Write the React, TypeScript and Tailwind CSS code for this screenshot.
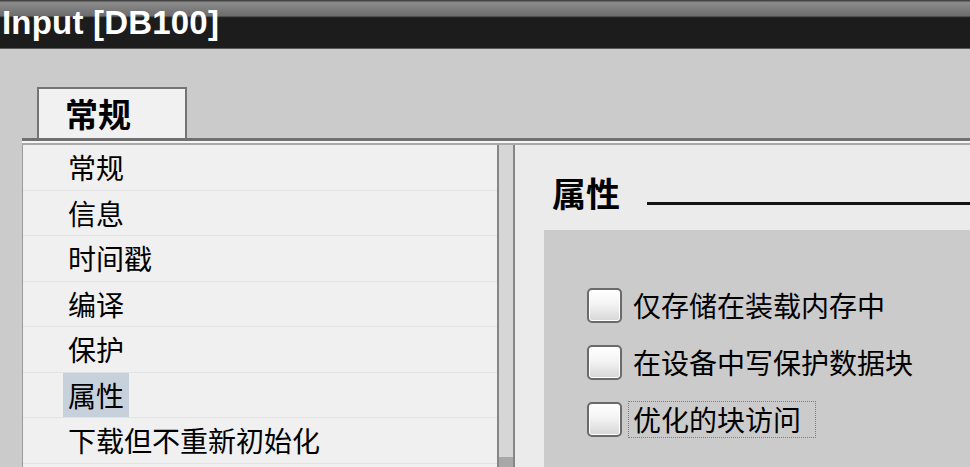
const cjk = '"Noto Sans CJK SC", sans-serif';

const navItems = ['常规', '信息', '时间戳', '编译', '保护', '属性', '下载但不重新初始化'];
const options = ['仅存储在装载内存中', '在设备中写保护数据块', '优化的块访问'];

function Checkbox() {
  return (
    <span className="box-border h-[35px] w-[35px] shrink-0 rounded-[5px] border-2 border-[#6a6a6a] bg-[linear-gradient(to_bottom,#ffffff_0%,#f4f4f4_45%,#d6d6d6_100%)] shadow-[inset_0_0_0_1px_#ffffff]" />
  );
}

export default function App() {
  return (
    <div
      className="flex h-[467px] w-[970px] flex-col overflow-hidden bg-[#cbcbcb]"
      style={{ fontFamily: cjk }}
    >
      <div className="box-border h-[49px] shrink-0 border-b border-[#5a5a5a] bg-[linear-gradient(to_bottom,#444444_0px,#444444_1px,#8c8c8c_2px,#6c6c6c_16px,#2e2e2e_17px,#1c1c1c_18px,#1c1c1c_100%)] pl-[2px] pt-[6px]">
        <span
          className="text-[33px] font-bold leading-[33px] tracking-[0.2px] text-white"
          style={{ fontFamily: '"Liberation Sans", Arial, sans-serif' }}
        >
          Input [DB100]
        </span>
      </div>

      <div className="flex h-[89px] shrink-0 items-end pl-[37px]">
        <div className="box-border flex h-[51px] w-[150px] items-center border-2 border-b-0 border-[#747474] bg-[#f1f1f1] pl-[26px] text-[33px] font-bold leading-none text-black">
          常规
        </div>
      </div>

      <div className="ml-[22px] flex min-h-0 flex-1 flex-col">
        <div className="h-[3px] shrink-0 bg-[#707070]" />
        <div className="h-[2px] shrink-0 bg-[#f6f6f6]" />
        <div className="h-[2px] shrink-0 bg-[#a8a8a8]" />

        <div className="flex min-h-0 flex-1">
          <div className="box-border w-[475px] shrink-0 border-l border-[#9a9a9a] bg-[#f0f0f0]">
            {navItems.map((item) => (
              <div
                key={item}
                className="flex h-[45.5px] items-center border-b border-[#e2e2e2] pl-[40px] pr-[18px]"
              >
                <span
                  className={`px-[5px] text-[28px] leading-[44px] text-black ${
                    item === '属性' ? 'bg-[#c7d1dc]' : ''
                  }`}
                >
                  {item}
                </span>
              </div>
            ))}
          </div>

          <div className="box-border flex w-[18px] shrink-0 flex-col border-x-2 border-[#868686] bg-[#d6d6d6]">
            <div className="flex-1" />
            <div className="h-[10px] bg-[#a8a8a8]" />
          </div>

          <div className="flex min-w-0 flex-1 flex-col bg-[#ebebeb]">
            <div className="flex h-[85px] shrink-0 items-center pl-[37px] pt-[10px]">
              <span className="text-[34px] font-bold leading-none text-black">属性</span>
              <div className="ml-[27px] mt-[22px] h-[3px] flex-1 bg-[#141414]" />
            </div>
            <div className="ml-[29px] flex flex-1 flex-col gap-[22px] bg-[#cbcbcb] pl-[43px] pt-[58px]">
              {options.map((opt, i) => (
                <label key={opt} className="flex h-[35px] items-center gap-[6px]">
                  <Checkbox />
                  <span
                    className={`pl-[4px] pr-[14px] text-[28px] leading-[35px] text-black ${
                      i === 2 ? 'border border-dotted border-[#7a7aa0]' : 'border border-transparent'
                    }`}
                  >
                    {opt}
                  </span>
                </label>
              ))}
            </div>
          </div>
        </div>
      </div>
    </div>
  );
}
